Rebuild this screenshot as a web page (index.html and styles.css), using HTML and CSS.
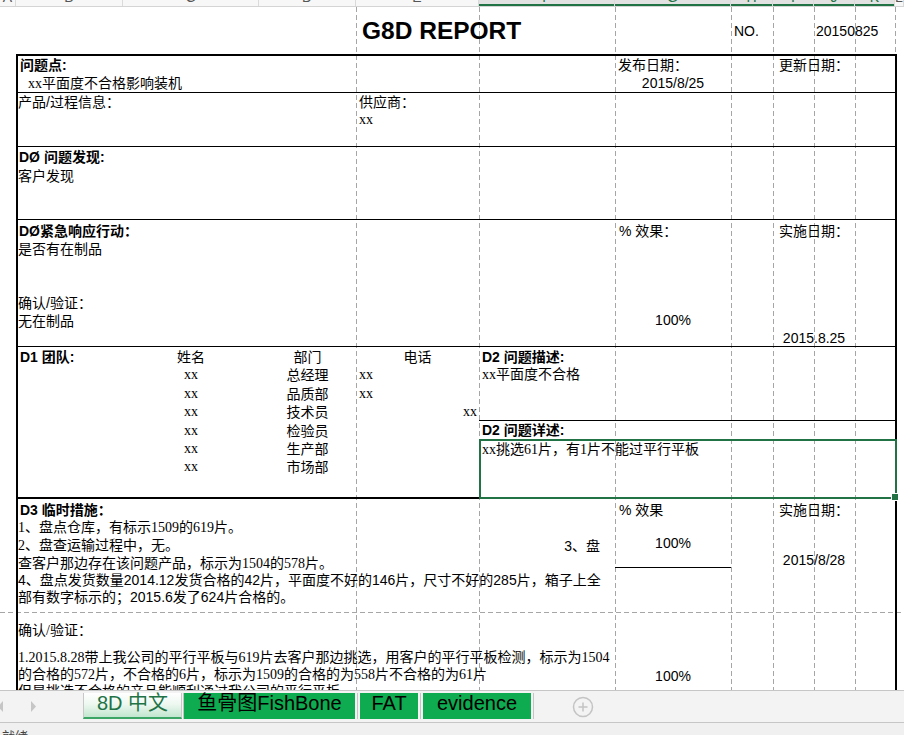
FILE: index.html
```html
<!DOCTYPE html>
<html lang="zh-CN">
<head>
<meta charset="utf-8">
<title>G8D REPORT</title>
<link rel="stylesheet" href="styles.css">
</head>
<body>
<div class="app">
  <div class="colhdr">
    <div class="ch"><span>A</span></div>
    <div class="ch"><span>B</span></div>
    <div class="ch"><span>C</span></div>
    <div class="ch"><span>D</span></div>
    <div class="ch"><span>E</span></div>
    <div class="ch sel"><span>F</span></div>
    <div class="ch sel"><span>G</span></div>
    <div class="ch sel"><span>H</span></div>
    <div class="ch sel"><span>I</span></div>
    <div class="ch sel"><span>J</span></div>
    <div class="ch sel"><span>K</span></div>
    <div class="ch"><span>L</span></div>
  </div>

  <div class="sheet">
    <div class="title-row">
      <div class="title">G8D REPORT</div>
      <div class="no">NO.</div>
      <div class="no-val">20150825</div>
    </div>

    <div class="tbl">
      <div class="sec s1">
        <div class="cell b-f">
          <div class="ln bd pl2">问题点:</div>
          <div class="ln pl10"><span class="sr">xx</span>平面度不合格影响装机</div>
        </div>
        <div class="cell g">
          <div class="ln pl3">发布日期：</div>
          <div class="ln ctr">2015/8/25</div>
        </div>
        <div class="cell i-k">
          <div class="ln pl6">更新日期：</div>
        </div>
      </div>

      <div class="sec s2">
        <div class="cell b-d">
          <div class="ln">产品/过程信息：</div>
        </div>
        <div class="cell e-f">
          <div class="ln pl3">供应商：</div>
          <div class="ln pl3 sr">xx</div>
        </div>
      </div>

      <div class="sec s3">
        <div class="cell b-f pt1">
          <div class="ln19 bd pl1">DØ 问题发现:</div>
          <div class="ln19">客户发现</div>
        </div>
      </div>

      <div class="sec s4">
        <div class="cell b-f pt2">
          <div class="ln bd pl1">DØ紧急响应行动：</div>
          <div class="ln">是否有在制品</div>
          <div class="ln mt36">确认/验证：</div>
          <div class="ln">无在制品</div>
        </div>
        <div class="cell g pt2">
          <div class="ln pl4">% 效果：</div>
          <div class="ln ctr mt71">100%</div>
        </div>
        <div class="cell i-j pt2">
          <div class="ln pl6">实施日期：</div>
          <div class="ln ctr mt89">2015.8.25</div>
        </div>
      </div>

      <div class="sec s5">
        <div class="cell b lower">
          <div class="ln184 bd pl2">D1 团队:</div>
        </div>
        <div class="cell c lower ctr">
          <div class="ln184">姓名</div>
          <div class="ln184 sr">xx</div>
          <div class="ln184 sr">xx</div>
          <div class="ln184 sr">xx</div>
          <div class="ln184 sr">xx</div>
          <div class="ln184 sr">xx</div>
          <div class="ln184 sr">xx</div>
        </div>
        <div class="cell d lower ctr">
          <div class="ln184">部门</div>
          <div class="ln184">总经理</div>
          <div class="ln184">品质部</div>
          <div class="ln184">技术员</div>
          <div class="ln184">检验员</div>
          <div class="ln184">生产部</div>
          <div class="ln184">市场部</div>
        </div>
        <div class="cell e lower">
          <div class="ln184 ctr">电话</div>
          <div class="ln184 sr pl3">xx</div>
          <div class="ln184 sr pl3">xx</div>
          <div class="ln184 sr rt">xx</div>
        </div>
        <div class="cell f-k d2">
          <div class="d2-desc">
            <div class="ln bd pl3">D2 问题描述:</div>
            <div class="ln sr pl3">xx平面度不合格</div>
          </div>
          <div class="d2-lbl">
            <div class="ln bd pl3">D2 问题详述:</div>
          </div>
          <div class="d2-box">
            <div class="ln sr pl1">xx挑选61片，有1片不能过平行平板</div>
          </div>
        </div>
      </div>

      <div class="sec s6">
        <div class="cell b-f pt2 pr15">
          <div class="ln bd pl2">D3 临时措施：</div>
          <div class="ln sr">1、盘点仓库，有标示1509的619片。</div>
          <div class="ln split"><span class="sr">2、盘查运输过程中，无。</span><span>3、盘</span></div>
          <div class="ln h16 sr">查客户那边存在该问题产品，标示为1504的578片。</div>
          <div class="ln h17">4、盘点发货数量2014.12发货合格的42片，平面度不好的146片，尺寸不好的285片，箱子上全</div>
          <div class="ln">部有数字标示的；2015.6发了624片合格的。</div>
          <div class="ln mt16 sr">确认/验证：</div>
          <div class="ln h17 mt9 sr">1.2015.8.28带上我公司的平行平板与619片去客户那边挑选，用客户的平行平板检测，标示为1504</div>
          <div class="ln h17 sr">的合格的572片，不合格的6片，标示为1509的合格的为558片不合格的为61片</div>
          <div class="ln sr clip7">但是挑选不合格的产品能顺利通过我公司的平行平板</div>
        </div>
        <div class="cell g g-split">
          <div class="g-top">
            <div class="ln pl4">% 效果</div>
            <div class="ln ctr mt15">100%</div>
          </div>
          <div class="g-bot">
            <div class="ln ctr">100%</div>
          </div>
        </div>
        <div class="cell i-j pt2">
          <div class="ln pl6">实施日期：</div>
          <div class="ln ctr mt32">2015/8/28</div>
        </div>
      </div>
    </div>
  </div>

  <div class="tabbar">
    <svg class="nav" width="83" height="26" viewBox="0 0 83 26">
      <polygon points="3,8 3,19 -2,13.5" fill="#c6c6c6"/>
      <polygon points="31,8 31,19 36,13.5" fill="#c6c6c6"/>
    </svg>
    <div class="tab active w-cn">8D 中文</div>
    <div class="sep s-narrow"></div>
    <div class="tab green w-fish">鱼骨图FishBone</div>
    <div class="sep"></div>
    <div class="tab green w-fat">FAT</div>
    <div class="sep"></div>
    <div class="tab green w-ev">evidence</div>
    <div class="sep s-end"></div>
    <svg class="plus" width="22" height="22" viewBox="0 0 22 22">
      <circle cx="11" cy="11" r="9.5" fill="none" stroke="#c4c4c4" stroke-width="1.5"/>
      <path d="M11 6.5v9M6.5 11h9" stroke="#c4c4c4" stroke-width="1.5" fill="none"/>
    </svg>
  </div>
  <div class="status">就绪</div>
</div>
</body>
</html>
```

FILE: styles.css
```css
* { box-sizing: border-box; margin: 0; padding: 0; }
html, body { width: 904px; height: 735px; overflow: hidden; background: #ffffff; }
body {
  font-family: "Liberation Sans", "Noto Sans CJK SC", sans-serif;
  font-size: 14px;
  color: #000;
}
.app { width: 904px; height: 735px; display: flex; flex-direction: column; overflow: hidden; }

/* column header */
.colhdr {
  flex: none;
  height: 7px;
  display: grid;
  grid-template-columns: 16px 107px 136px 97px 123px 136px 116px 42px 41px 41px 40px 9px;
  background: #f7f7f7;
  border-bottom: 1px solid #d4d4d4;
}
.ch { height: 6px; overflow: hidden; text-align: center; color: #555; border-right: 1px solid #dadada; }
.ch span { display: block; font-size: 14px; line-height: 14px; margin-top: -10px; }
.ch.sel { background: #e2e2e2; color: #217346; box-shadow: inset 0 -2px 0 #217346; }

/* sheet with dashed gridlines */
.sheet {
  flex: none;
  height: 683px;
  overflow: hidden;
  background-color: #fff;
  background-image:
    linear-gradient(#a6a6a6 5px, transparent 5px),
    linear-gradient(#a6a6a6 5px, transparent 5px),
    linear-gradient(#a6a6a6 5px, transparent 5px),
    linear-gradient(#a6a6a6 5px, transparent 5px),
    linear-gradient(#a6a6a6 5px, transparent 5px),
    linear-gradient(#a6a6a6 5px, transparent 5px),
    linear-gradient(#a6a6a6 5px, transparent 5px),
    linear-gradient(#a6a6a6 5px, transparent 5px),
    linear-gradient(90deg, #a6a6a6 5px, transparent 5px);
  background-size: 1px 8px, 1px 8px, 1px 8px, 1px 8px, 1px 8px, 1px 8px, 1px 8px, 1px 8px, 8px 1px;
  background-position: 356px 0, 479px 0, 615px 0, 731px 0, 773px 0, 814px 0, 855px 0, 895px 0, 0 605px;
  background-repeat: repeat-y, repeat-y, repeat-y, repeat-y, repeat-y, repeat-y, repeat-y, repeat-y, repeat-x;
}

.title-row {
  height: 47px;
  display: grid;
  grid-template-columns: 16px 107px 136px 97px 123px 136px 116px 42px 41px 41px 40px 9px;
}
.title {
  grid-column: 5 / 8;
  padding: 10px 0 0 6px;
  font-size: 24.5px;
  line-height: 28px;
  font-weight: bold;
  white-space: nowrap;
}
.no { grid-column: 8 / 9; padding: 16px 0 0 3px; line-height: 16px; white-space: nowrap; }
.no-val { grid-column: 10 / 12; padding: 16px 0 0 2px; line-height: 16px; white-space: nowrap; }

/* report table */
.tbl {
  width: 881px;
  margin-left: 16px;
  border: 2px solid #000;
  border-bottom: none;
}
.sec {
  display: grid;
  grid-template-columns: 105px 136px 97px 123px 136px 116px 42px 41px 41px 40px;
  border-bottom: 1px solid #000;
}
.s1 { height: 37px; }
.s2 { height: 54px; }
.s3 { height: 73px; }
.s4 { height: 127px; }
.s5 { height: 152px; border-bottom: none; }
.s6 { height: 200px; border-bottom: none; }

.cell { grid-row: 1; }
.b-f { grid-column: 1 / 6; }
.b-d { grid-column: 1 / 4; }
.e-f { grid-column: 4 / 6; }
.g { grid-column: 6 / 7; }
.i-j { grid-column: 8 / 10; }
.i-k { grid-column: 8 / 11; }
.f-k { grid-column: 5 / 11; }
.b { grid-column: 1 / 2; }
.c { grid-column: 2 / 3; }
.d { grid-column: 3 / 4; }
.e { grid-column: 4 / 5; }

.ln { height: 18px; line-height: 18px; white-space: nowrap; }
.ln19 { height: 19px; line-height: 19px; white-space: nowrap; }
.ln184 { height: 18.4px; line-height: 18.4px; white-space: nowrap; }
.h16 { height: 16px; }
.h17 { height: 17px; }
.clip7 { height: 7px; overflow: hidden; }

.bd { font-weight: bold; }
.sr { font-family: "Liberation Serif", "Noto Sans CJK SC", serif; }
.ctr { text-align: center; }
.rt { text-align: right; padding-right: 2px; }
.split { display: flex; justify-content: space-between; }

.pl1 { padding-left: 1px; }
.pl2 { padding-left: 2px; }
.pl3 { padding-left: 3px; }
.pl4 { padding-left: 4px; }
.pl6 { padding-left: 6px; }
.pl10 { padding-left: 10px; }
.pt1 { padding-top: 1px; }
.pt2 { padding-top: 2px; }
.pr15 { padding-right: 15px; }
.mt9 { margin-top: 9px; }
.mt15 { margin-top: 15px; }
.mt16 { margin-top: 16px; }
.mt32 { margin-top: 32px; }
.mt36 { margin-top: 36px; }
.mt71 { margin-top: 71px; }
.mt89 { margin-top: 89px; }

.lower { border-bottom: 2px solid #000; padding-top: 1px; }

.d2 { display: flex; flex-direction: column; }
.d2-desc { height: 74px; border-bottom: 1px solid #000; padding-top: 1px; }
.d2-lbl { height: 18px; }
.d2-box {
  position: relative;
  height: 60px;
  margin-right: -2px;
  border: 2px solid #217346;
}
.d2-box::after {
  content: "";
  position: absolute;
  right: -4px;
  bottom: -4px;
  width: 6px;
  height: 6px;
  background: #217346;
  border: 1px solid #fff;
}

.g-split { display: flex; flex-direction: column; }
.g-top { height: 69px; border-bottom: 1px solid #000; padding-top: 2px; }
.g-bot { padding-top: 99px; }

/* sheet tabs */
.tabbar {
  flex: none;
  height: 33px;
  display: flex;
  align-items: flex-start;
  padding-top: 2px;
  background: #f3f3f3;
  border-top: 1px solid #c6c6c6;
  border-bottom: 1px solid #c6c6c6;
}
.nav { flex: none; display: block; }
.tab {
  flex: none;
  height: 26px;
  line-height: 21px;
  font-size: 20px;
  text-align: center;
  white-space: nowrap;
  font-family: "Liberation Sans", "Noto Sans CJK SC", sans-serif;
}
.tab.active {
  color: #217346;
  background: linear-gradient(#ffffff 0%, #eef8f1 45%, #c2e6cf 100%);
  border-left: 1px solid #c8c8c8;
  border-right: 1px solid #c8c8c8;
  border-bottom: 2px solid #3aa565;
}
.tab.green { background: #0eab50; color: #000; }
.w-cn { width: 99px; }
.w-fish { width: 171px; }
.w-fat { width: 58px; }
.w-ev { width: 108px; }
.sep { flex: none; width: 5px; height: 26px; display: flex; justify-content: center; }
.sep::before { content: ""; width: 1px; height: 26px; background: #c4c4c4; }
.s-narrow { width: 2px; }
.s-end { width: 4px; }
.plus { flex: none; display: block; margin: 3px 0 0 37px; }

.status {
  flex: none;
  height: 12px;
  overflow: hidden;
  background: #f0f0f0;
  padding: 6px 0 0 2px;
  font-size: 13px;
  line-height: 16px;
  color: #444;
}
```
